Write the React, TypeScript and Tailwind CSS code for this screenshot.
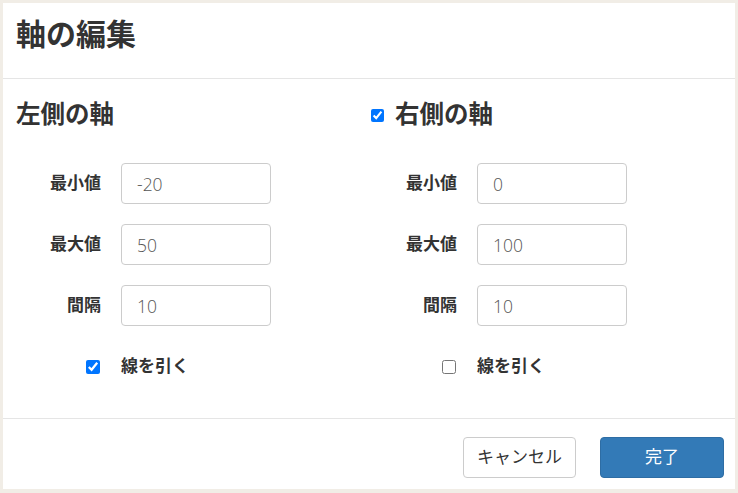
import * as React from "react"

const font = { fontFamily: '"Liberation Sans", "Noto Sans CJK JP", sans-serif' }
const numFont = { fontFamily: '"Open Sans", "Noto Sans CJK JP", sans-serif' }

type AxisProps = {
  title: string
  toggle?: boolean
  min: string
  max: string
  step: string
  grid: boolean
}

function AxisColumn({ title, toggle, min, max, step, grid }: AxisProps) {
  const rows = [
    { label: "最小値", value: min },
    { label: "最大値", value: max },
    { label: "間隔", value: step },
  ]

  return (
    <div className="flex flex-col">
      <div className="flex h-[26px] items-center pl-[13px]">
        {toggle && (
          <input
            type="checkbox"
            defaultChecked
            className="mr-[11px] ml-[-1px] size-[13px] accent-[#0075ff]"
          />
        )}
        <h2 className="text-[24.5px] leading-[26px] font-bold text-[#333]">{title}</h2>
      </div>

      <div className="mt-[35px] flex flex-col gap-[20px]">
        {rows.map((r) => (
          <div key={r.label} className="flex items-center gap-[20px]">
            <label className="w-[98px] text-right text-[17px] font-bold text-[#333]">
              {r.label}
            </label>
            <input
              type="text"
              defaultValue={r.value}
              className="h-[41px] w-[150px] rounded-[4px] border border-[#ccc] px-[15px] text-[17.5px] font-light text-[#555] outline-none"
              style={numFont}
            />
          </div>
        ))}
      </div>

      <div className="mt-[31px] flex h-[20px] items-center gap-[20px]">
        <div className="flex w-[98px] justify-end pr-[1px]">
          <input
            type="checkbox"
            defaultChecked={grid}
            className="size-[14px] accent-[#0075ff]"
          />
        </div>
        <span className="text-[17px] font-bold text-[#333]">線を引く</span>
      </div>
    </div>
  )
}

export default function App() {
  return (
    <div
      className="flex h-[493px] w-[738px] bg-[#f1ede6] px-[3px] pt-[3px] pb-[4px]"
      style={font}
    >
      <div className="flex flex-1 flex-col bg-white">
        <div className="h-[76px] border-b border-[#e5e5e5] px-[13px] pt-[17px]">
          <h1 className="text-[30px] leading-[30px] font-bold text-[#333]">軸の編集</h1>
        </div>

        <div className="grid flex-1 grid-cols-[356px_1fr] border-b border-[#e5e5e5] pt-[23px]">
          <AxisColumn title="左側の軸" min="-20" max="50" step="10" grid />
          <AxisColumn title="右側の軸" toggle min="0" max="100" step="10" grid={false} />
        </div>

        <div className="flex h-[70px] items-start justify-end gap-[24px] px-[11px] pt-[18px]">
          <button className="h-[41px] w-[113px] rounded-[4px] border border-[#ccc] bg-white text-[17px] text-[#333]">
            キャンセル
          </button>
          <button className="h-[41px] w-[124px] rounded-[4px] border border-[#2e6da4] bg-[#337ab7] text-[17px] text-white">
            完了
          </button>
        </div>
      </div>
    </div>
  )
}
